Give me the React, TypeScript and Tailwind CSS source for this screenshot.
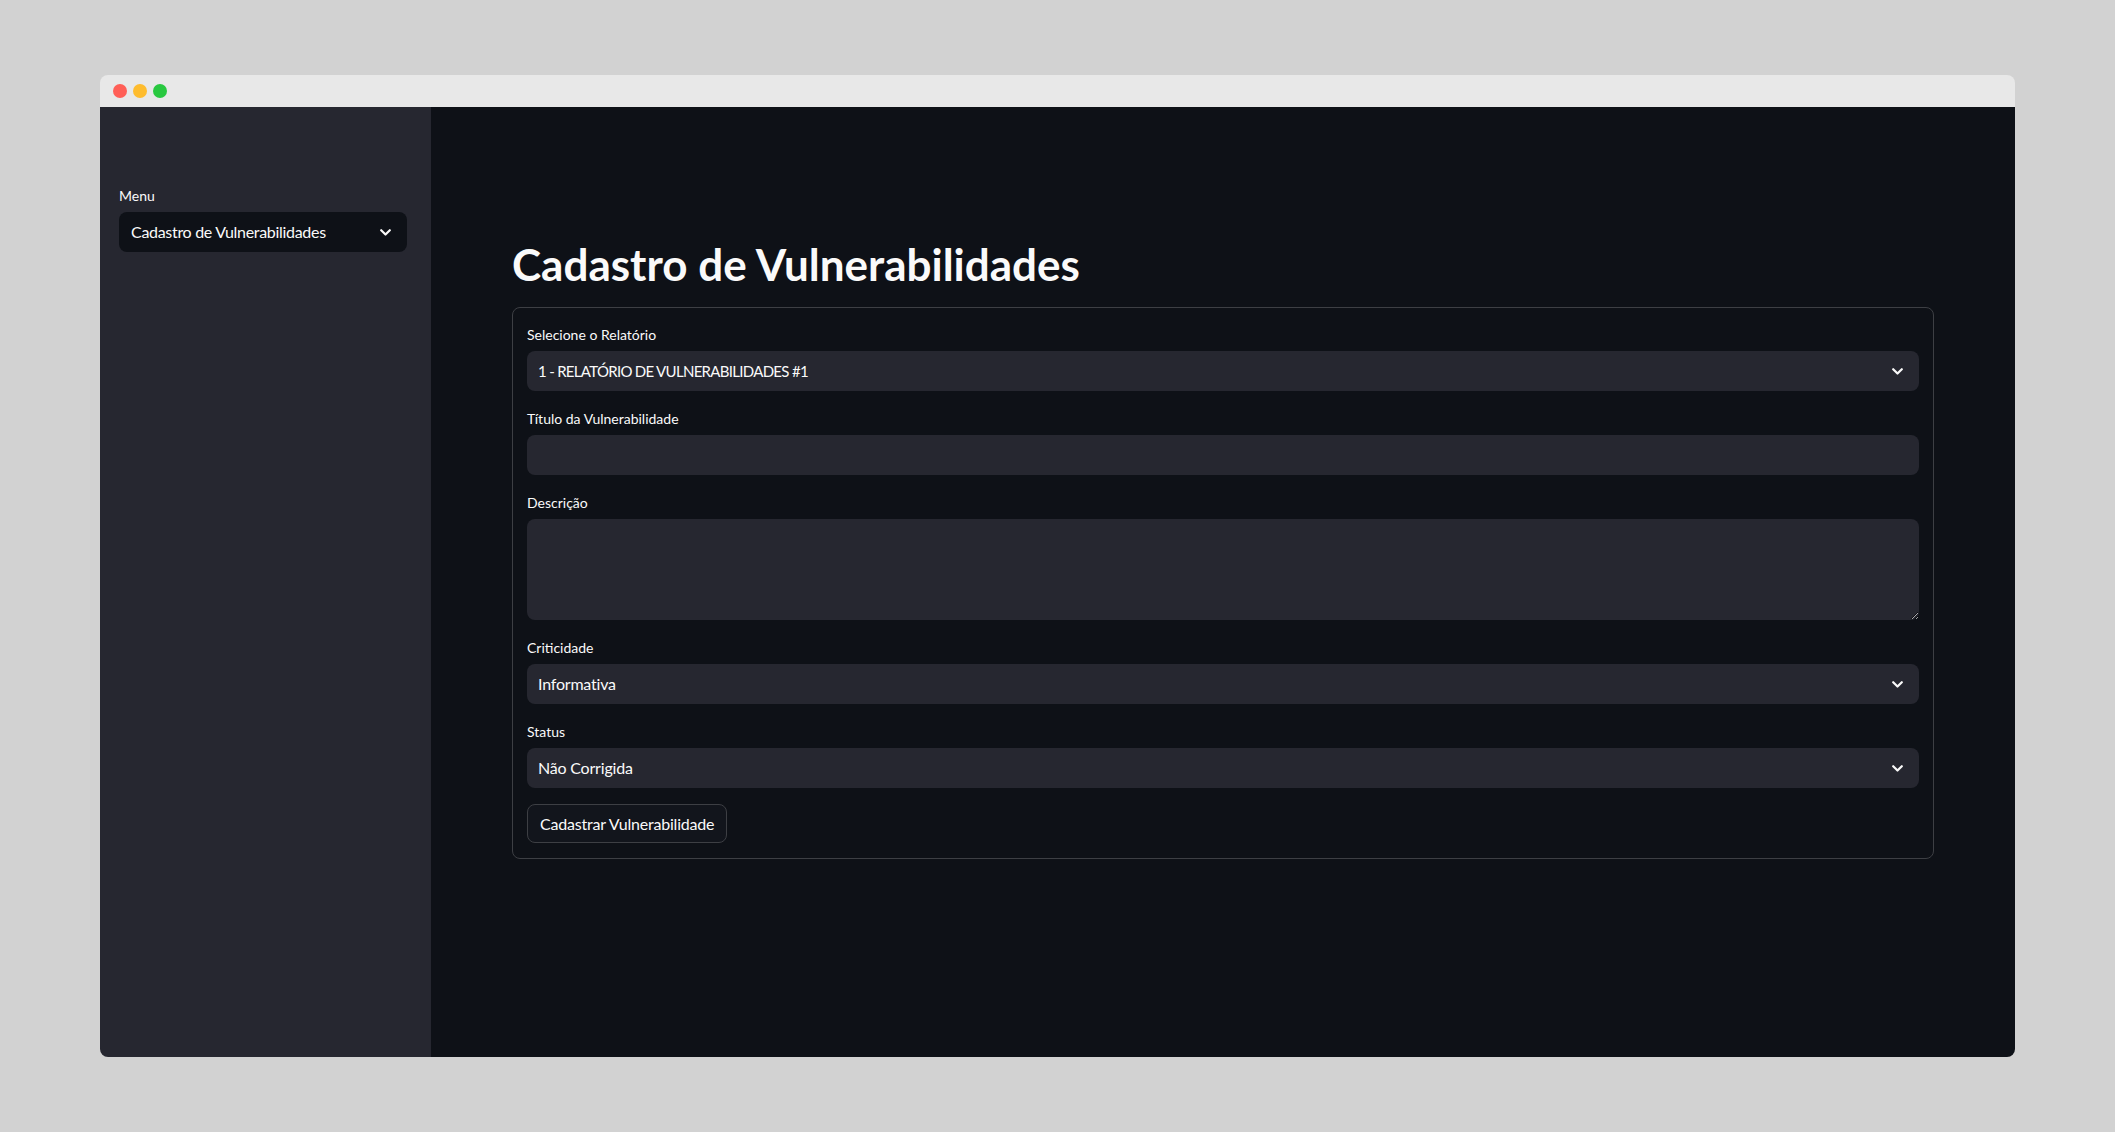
const font = { fontFamily: "Lato, 'Noto Sans', sans-serif" };

const Chevron = () => (
  <svg width="11" height="7" viewBox="0 0 11 7" fill="none" className="shrink-0">
    <path d="M1.2 1.2 L5.5 5.5 L9.8 1.2" stroke="#fafafa" strokeWidth="2.2" strokeLinecap="round" strokeLinejoin="round" />
  </svg>
);

const FieldLabel = ({ text }: { text: string }) => (
  <div className="h-[28px] text-[14px] leading-[24px] text-[#fafafa]">{text}</div>
);

const SelectBox = ({ value, caps }: { value: string; caps?: boolean }) => (
  <div className="h-[40px] rounded-lg bg-[#262730] flex items-center justify-between pl-[11px] pr-[16px] text-[16px] text-[#fafafa]">
    <span className={caps ? "text-[15px] tracking-[-0.7px]" : "tracking-[-0.2px]"}>{value}</span>
    <Chevron />
  </div>
);

const App = () => {
  return (
    <div className="w-full h-screen bg-[#d2d2d2] pt-[75px] pl-[100px]" style={font}>
      <div className="w-[1915px] h-[982px] rounded-lg overflow-hidden flex flex-col">
        <div className="h-[32px] bg-[#e8e8e8] flex items-center gap-[6px] pl-[13px] shrink-0">
          <span className="w-[14px] h-[14px] rounded-full bg-[#ff5f57]" />
          <span className="w-[14px] h-[14px] rounded-full bg-[#febc2e]" />
          <span className="w-[14px] h-[14px] rounded-full bg-[#28c840]" />
        </div>

        <div className="flex flex-1">
          <aside className="w-[331px] bg-[#262730] pt-[77px] pl-[19px] pr-[24px]">
            <FieldLabel text="Menu" />
            <div className="h-[40px] rounded-lg bg-[#0e1117] flex items-center justify-between pl-[12px] pr-[16px] text-[16px] text-[#fafafa]">
              <span className="tracking-[-0.3px]">Cadastro de Vulnerabilidades</span>
              <Chevron />
            </div>
          </aside>

          <main className="flex-1 bg-[#0e1117] px-[81px] pt-[131px]">
            <h1 className="text-[44px] leading-[52px] font-bold text-[#fafafa] mb-[17px]">
              Cadastro de Vulnerabilidades
            </h1>

            <div className="border border-[#3d3f44] rounded-lg px-[14px] pt-[15px] pb-[15px] flex flex-col gap-[16px]">
              <div>
                <FieldLabel text="Selecione o Relatório" />
                <SelectBox value="1 - RELATÓRIO DE VULNERABILIDADES #1" caps />
              </div>
              <div>
                <FieldLabel text="Título da Vulnerabilidade" />
                <input className="w-full h-[40px] rounded-lg bg-[#262730] px-[11px] text-[16px] text-[#fafafa] outline-none" />
              </div>
              <div>
                <FieldLabel text="Descrição" />
                <textarea className="block w-full h-[101px] rounded-lg bg-[#262730] px-[11px] py-[8px] text-[16px] text-[#fafafa] outline-none resize-y" />
              </div>
              <div>
                <FieldLabel text="Criticidade" />
                <SelectBox value="Informativa" />
              </div>
              <div>
                <FieldLabel text="Status" />
                <SelectBox value="Não Corrigida" />
              </div>
              <div>
                <button className="h-[39px] px-[12px] rounded-lg border border-[#3d3f44] bg-[#12151c] text-[16px] tracking-[-0.2px] text-[#fafafa]">
                  Cadastrar Vulnerabilidade
                </button>
              </div>
            </div>
          </main>
        </div>
      </div>
    </div>
  );
};

export default App;
